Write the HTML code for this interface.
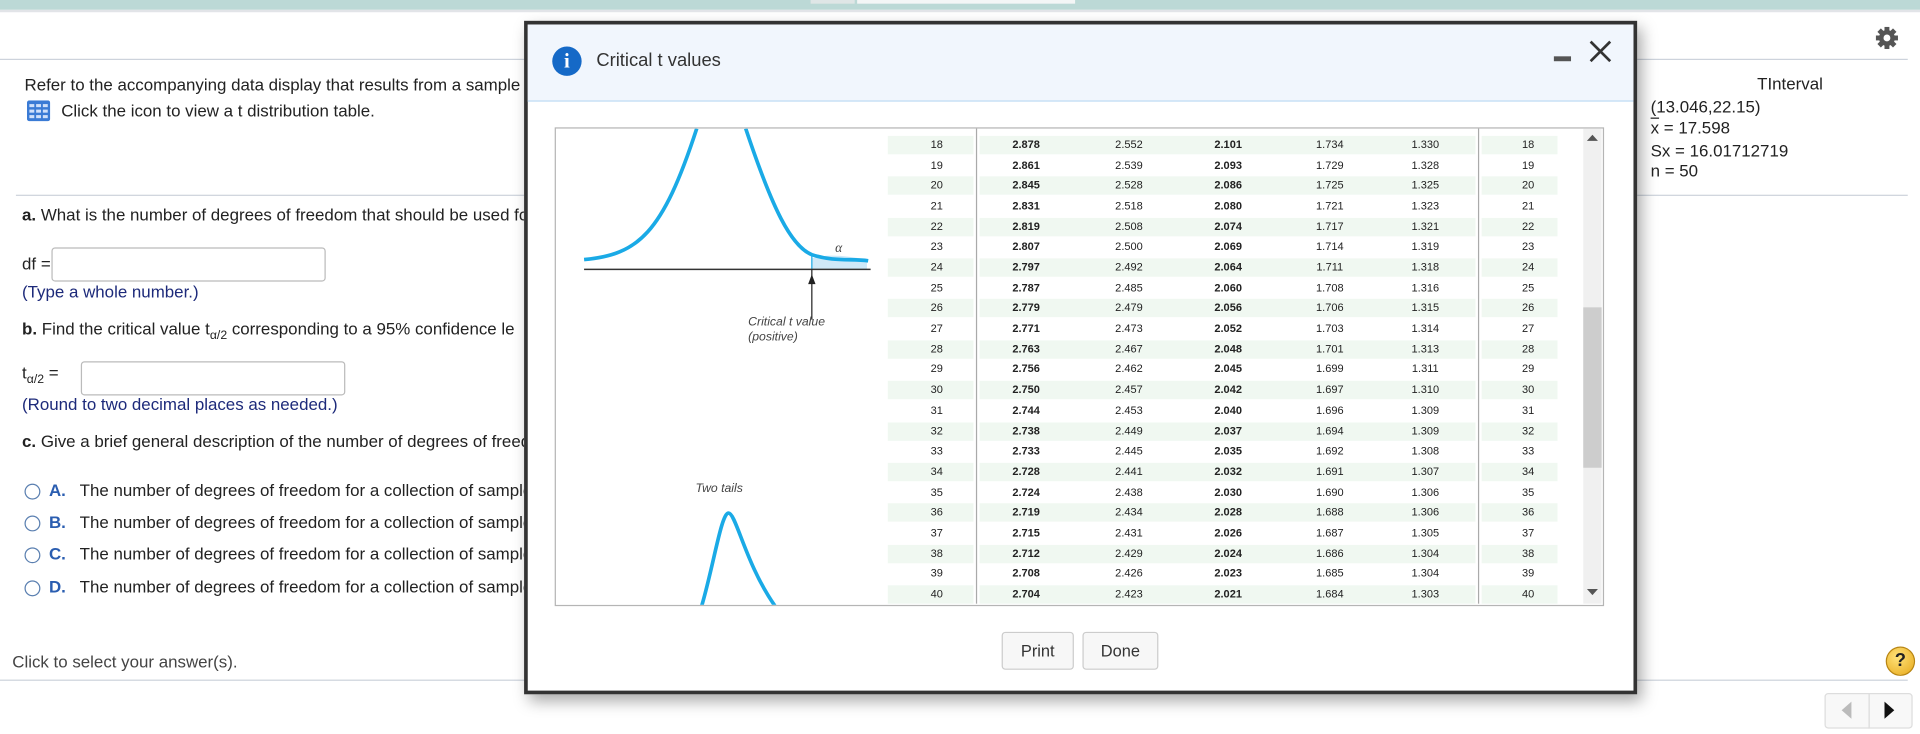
<!DOCTYPE html>
<html><head><meta charset="utf-8"><style>
html,body{margin:0;padding:0;width:1920px;height:734px;overflow:hidden;background:#fff}
#w{position:absolute;left:0;top:0;width:1568px;height:599px;transform:scale(1.22449);transform-origin:0 0;font-family:"Liberation Sans",Arial,sans-serif;color:#222;font-size:13.8px}
.a{position:absolute;white-space:nowrap}
.hl{position:absolute;height:1px;background:#cdd3dc}
.inp{position:absolute;border:1px solid #bbb;border-radius:3px;background:#fff}
.nv{color:#1d2a7a}
.rad{position:absolute;width:11px;height:11px;border:1.3px solid #5a7fb0;border-radius:50%}
.lb{color:#2a5db0;font-weight:bold}
.tb{position:absolute;font-family:"Liberation Sans Narrow","Liberation Sans",sans-serif;font-size:9px;color:#222}
.g{position:absolute;background:#f0f8f1;height:15px}
.btn{position:absolute;border:1px solid #ccc;border-radius:3px;background:#f7f7f7;font-size:13.4px;text-align:center;line-height:29px;color:#333}
</style></head><body><div id="w">
<div class="a" style="left:0;top:0;width:1568px;height:8px;background:#bcd9d6"></div>
<div class="a" style="left:0;top:8px;width:1568px;height:2px;background:#e2e4e8"></div>
<div class="a" style="left:662px;top:0;width:36px;height:3px;background:#dfe6e6"></div>
<div class="a" style="left:700px;top:0;width:178px;height:3px;background:#f4f6f6"></div>
<svg class="a" style="left:1531px;top:21px" width="20" height="20" viewBox="0 0 20 20"><g fill="#555"><circle cx="10" cy="10" r="6.5"/><rect x="8" y="1" width="4" height="18"/><rect x="1" y="8" width="18" height="4"/><rect x="8" y="1" width="4" height="18" transform="rotate(45 10 10)"/><rect x="8" y="1" width="4" height="18" transform="rotate(-45 10 10)"/></g><circle cx="10" cy="10" r="2.8" fill="#fff"/></svg>
<div class="hl" style="left:0;top:48px;width:1558px"></div>
<div class="a" style="left:20px;top:62px">Refer to the accompanying data display that results from a sample</div>
<svg class="a" style="left:22px;top:82px" width="19" height="17" viewBox="0 0 19 17"><rect x="0" y="0" width="19" height="17" rx="2" fill="#3a7bd5"/><g fill="#cfe0fa"><rect x="2" y="3" width="4" height="2.5"/><rect x="7.5" y="3" width="4" height="2.5"/><rect x="13" y="3" width="4" height="2.5"/><rect x="2" y="7.5" width="4" height="2.5"/><rect x="7.5" y="7.5" width="4" height="2.5"/><rect x="13" y="7.5" width="4" height="2.5"/><rect x="2" y="12" width="4" height="2.5"/><rect x="7.5" y="12" width="4" height="2.5"/><rect x="13" y="12" width="4" height="2.5"/></g></svg>
<div class="a" style="left:50px;top:83px">Click the icon to view a t distribution table.</div>
<div class="hl" style="left:13px;top:159px;width:1545px"></div>
<div class="a" style="left:18px;top:168px"><b>a.</b> What is the number of degrees of freedom that should be used fo</div>
<div class="a" style="left:18px;top:208px">df =</div>
<div class="inp" style="left:42px;top:202px;width:222px;height:26px"></div>
<div class="a nv" style="left:18px;top:231px">(Type a whole number.)</div>
<div class="a" style="left:18px;top:261px"><b>b.</b> Find the critical value t<sub style="font-size:10px">α/2</sub> corresponding to a 95% confidence le</div>
<div class="a" style="left:18px;top:297px">t<sub style="font-size:10px">α/2</sub> =</div>
<div class="inp" style="left:66px;top:295px;width:214px;height:26px"></div>
<div class="a nv" style="left:18px;top:323px">(Round to two decimal places as needed.)</div>
<div class="a" style="left:18px;top:353px"><b>c.</b> Give a brief general description of the number of degrees of freed</div>
<div class="rad" style="left:20px;top:395px"></div><div class="a" style="left:40px;top:393px"><span class="lb">A.</span>&nbsp;&nbsp; The number of degrees of freedom for a collection of sample</div>
<div class="rad" style="left:20px;top:421px"></div><div class="a" style="left:40px;top:419px"><span class="lb">B.</span>&nbsp;&nbsp; The number of degrees of freedom for a collection of sample</div>
<div class="rad" style="left:20px;top:447px"></div><div class="a" style="left:40px;top:445px"><span class="lb">C.</span>&nbsp;&nbsp; The number of degrees of freedom for a collection of sample</div>
<div class="rad" style="left:20px;top:474px"></div><div class="a" style="left:40px;top:472px"><span class="lb">D.</span>&nbsp;&nbsp; The number of degrees of freedom for a collection of sample</div>
<div class="a" style="left:10px;top:533px;color:#444">Click to select your answer(s).</div>
<div class="hl" style="left:0;top:555px;width:1558px"></div>
<div class="a" style="left:1540px;top:528px;width:22px;height:22px;border-radius:50%;background:radial-gradient(circle at 40% 35%,#ffe27a,#e7a91a);border:1px solid #b88512;text-align:center;line-height:22px;font-weight:bold;font-size:15px;color:#222">?</div>
<div class="a" style="left:1490px;top:566px;width:35px;height:27px;border:1px solid #ddd;border-radius:3px 0 0 3px;background:#f8f8f8"></div>
<div class="a" style="left:1526px;top:566px;width:34px;height:27px;border:1px solid #ddd;border-radius:0 3px 3px 0;background:#f8f8f8"></div>
<svg class="a" style="left:1502px;top:572px" width="12" height="16"><polygon points="10,1 10,15 2,8" fill="#bbb"/></svg>
<svg class="a" style="left:1537px;top:572px" width="12" height="16"><polygon points="2,1 2,15 10,8" fill="#111"/></svg>
<div class="a" style="left:1435px;top:61px">TInterval</div>
<div class="a" style="left:1348px;top:80px">(13.046,22.15)</div>
<div class="a" style="left:1348px;top:97px"><span style="text-decoration:overline">x</span> = 17.598</div>
<div class="a" style="left:1348px;top:116px">Sx = 16.01712719</div>
<div class="a" style="left:1348px;top:132px">n = 50</div>

<div class="a" style="left:428px;top:17px;width:903px;height:544px;border:3px solid #333;background:#fff;box-shadow:4px 6px 12px rgba(0,0,0,.35)">
 <div class="a" style="left:0;top:0;width:903px;height:62px;background:#f1f6fd;border-bottom:1px solid #bfdcf3"></div>
 <div class="a" style="left:20px;top:18px;width:24px;height:24px;border-radius:50%;background:#1569c7;color:#fff;text-align:center;font:bold 17px/24px 'Liberation Serif',serif">i</div>
 <div class="a" style="left:56px;top:21px;font-size:15px;color:#333">Critical t values</div>
 <div class="a" style="left:838px;top:26px;width:14px;height:4px;background:#555"></div>
 <svg class="a" style="left:866px;top:12px" width="20" height="20"><path d="M2 2L18 18M18 2L2 18" stroke="#333" stroke-width="2.2"/></svg>
</div>
<div class="a" style="left:453px;top:104px;width:855px;height:389px;border:1px solid #b5b5b5;overflow:hidden;background:#fff">
 <svg class="a" style="left:0;top:0" width="265" height="389" viewBox="453 104 265 389">
  <path d="M662 210 C675 206 690 208 707 211 L707 219 L662 219Z" fill="#cfe9f8"/>
  <path d="M476 211 C520 207 540 190 568 104 M608 104 C630 170 645 200 662 207 C680 213 695 210 708 212" fill="none" stroke="#1aaae6" stroke-width="3"/>
  <line x1="662" y1="207" x2="662" y2="219" stroke="#1aaae6" stroke-width="1"/>
  <line x1="476" y1="219" x2="710" y2="219" stroke="#333" stroke-width="1.3"/>
  <line x1="662" y1="219" x2="662" y2="260" stroke="#222" stroke-width="1"/>
  <polygon points="662,223 659,231 665,231" fill="#222"/>
  <text x="681" y="205" font-family="Liberation Serif" font-style="italic" font-size="11" fill="#444">α</text>
  <text x="610" y="265" font-family="Liberation Sans" font-style="italic" font-size="10" fill="#444">Critical <tspan>t</tspan> value</text>
  <text x="610" y="277" font-family="Liberation Sans" font-style="italic" font-size="10" fill="#444">(positive)</text>
  <text x="567" y="401" font-family="Liberation Sans" font-style="italic" font-size="10" fill="#444">Two tails</text>
  <path d="M572 494 C582 460 588 418 594 418 C600 418 608 460 632 494" fill="none" stroke="#1aaae6" stroke-width="3"/>
 </svg>
</div>
<div class="a" style="left:797px;top:105px;width:1px;height:388px;background:#aaa"></div>
<div class="a" style="left:1207px;top:105px;width:1px;height:388px;background:#aaa"></div>
<div class="a" style="left:1293px;top:105px;width:15px;height:388px;background:#f0f0f0"></div>
<div class="a" style="left:1293px;top:251px;width:15px;height:131px;background:#cdcdcd"></div>
<svg class="a" style="left:1296px;top:109px" width="9" height="7"><polygon points="0,6 9,6 4.5,1" fill="#555"/></svg>
<svg class="a" style="left:1296px;top:480px" width="9" height="7"><polygon points="0,1 9,1 4.5,6" fill="#555"/></svg>
<div id="tbl"></div>
<div class="btn" style="left:818px;top:516px;width:57px;height:29px">Print</div>
<div class="btn" style="left:884px;top:516px;width:60px;height:29px">Done</div>
</div>
<script>
var d=[[18,"2.878","2.552","2.101","1.734","1.330"],[19,"2.861","2.539","2.093","1.729","1.328"],[20,"2.845","2.528","2.086","1.725","1.325"],[21,"2.831","2.518","2.080","1.721","1.323"],[22,"2.819","2.508","2.074","1.717","1.321"],[23,"2.807","2.500","2.069","1.714","1.319"],[24,"2.797","2.492","2.064","1.711","1.318"],[25,"2.787","2.485","2.060","1.708","1.316"],[26,"2.779","2.479","2.056","1.706","1.315"],[27,"2.771","2.473","2.052","1.703","1.314"],[28,"2.763","2.467","2.048","1.701","1.313"],[29,"2.756","2.462","2.045","1.699","1.311"],[30,"2.750","2.457","2.042","1.697","1.310"],[31,"2.744","2.453","2.040","1.696","1.309"],[32,"2.738","2.449","2.037","1.694","1.309"],[33,"2.733","2.445","2.035","1.692","1.308"],[34,"2.728","2.441","2.032","1.691","1.307"],[35,"2.724","2.438","2.030","1.690","1.306"],[36,"2.719","2.434","2.028","1.688","1.306"],[37,"2.715","2.431","2.026","1.687","1.305"],[38,"2.712","2.429","2.024","1.686","1.304"],[39,"2.708","2.426","2.023","1.685","1.304"],[40,"2.704","2.423","2.021","1.684","1.303"]];
var xs=[765,838,922,1003,1086,1164,1248],h="";
d.forEach(function(r,i){var y=110+i*16.68;
 if(i%2==0){h+='<div class="g" style="left:725px;top:'+(y+1)+'px;width:70px"></div><div class="g" style="left:800px;top:'+(y+1)+'px;width:405px"></div><div class="g" style="left:1210px;top:'+(y+1)+'px;width:62px"></div>';}
 var row=[r[0]].concat(r.slice(1)).concat([r[0]]);
 row.forEach(function(v,j){h+='<div class="tb" style="left:'+(xs[j]-20)+'px;width:40px;text-align:center;top:'+(y+3)+'px;'+((j==1||j==3)?'font-weight:bold;':'')+'">'+v+'</div>';});
});
document.getElementById('tbl').outerHTML=h;
</script>
</body></html>
